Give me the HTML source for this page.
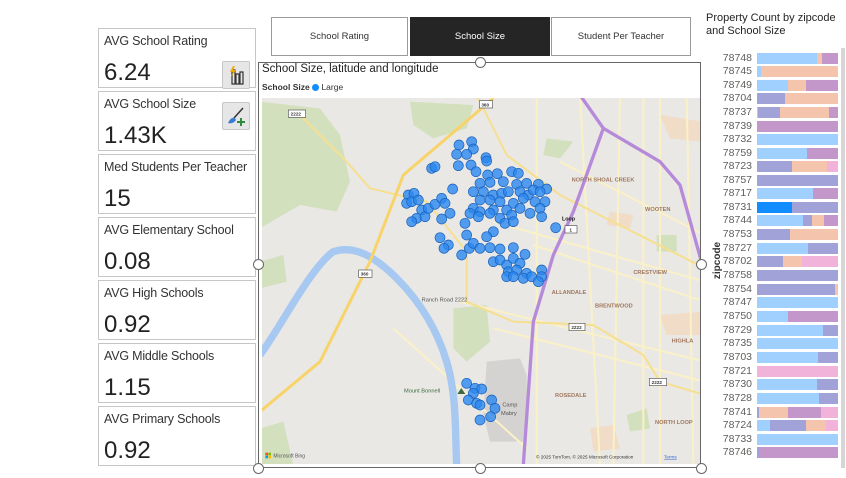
<!DOCTYPE html>
<html><head><meta charset="utf-8"><style>
*{margin:0;padding:0;box-sizing:border-box}
body{width:846px;height:478px;background:#fff;font-family:"Liberation Sans",sans-serif;position:relative;overflow:hidden;color:#252423}
.card{position:absolute;left:98px;width:158px;height:60px;border:1px solid #c8c6c4;background:#fff}
.card .l{position:absolute;left:5px;top:5px;font-size:12.5px;color:#333;white-space:nowrap;letter-spacing:-0.2px}
.card .v{position:absolute;left:5px;top:30px;font-size:24px;color:#222}
.tab{position:absolute;top:17px;height:39px;border:1px solid #9a9a9a;font-size:9.5px;display:flex;align-items:center;justify-content:center;color:#333;background:#fff}
.btn{position:absolute;left:222px;width:28px;height:28px;background:#e6e6e6;border:1px solid #c8c8c8;border-radius:2px}
.h{position:absolute;width:11px;height:11px;border:1px solid #666;border-radius:50%;background:#fff}
.row{position:absolute;left:706px;height:11px;width:132px}
.row span{position:absolute;right:86px;width:40px;text-align:right;font-size:10.5px;color:#605e5c;top:-1px}
.bar{position:absolute;left:51px;width:81px;height:11px;display:flex}
.bar i{display:block;height:11px}
.a{background:#9fd0ff}.p{background:#f5c4ac}.u{background:#c397c9}.w{background:#a1a3d8}.k{background:#f2b3da}.d{background:#118dff}
</style></head><body>

<div class="card" style="top:28px"><div class="l">AVG School Rating</div><div class="v">6.24</div></div>
<div class="card" style="top:91px"><div class="l">AVG School Size</div><div class="v">1.43K</div></div>
<div class="card" style="top:154px"><div class="l">Med Students Per Teacher</div><div class="v">15</div></div>
<div class="card" style="top:217px"><div class="l">AVG Elementary School</div><div class="v">0.08</div></div>
<div class="card" style="top:280px"><div class="l">AVG High Schools</div><div class="v">0.92</div></div>
<div class="card" style="top:343px"><div class="l">AVG Middle Schools</div><div class="v">1.15</div></div>
<div class="card" style="top:406px"><div class="l">AVG Primary Schools</div><div class="v">0.92</div></div>

<div class="btn" style="top:61px"><svg width="28" height="28"><path d="M9 8h3v14H9zM13 12h3v10h-3zM17 10h3v12h-3z" fill="none" stroke="#333" stroke-width="1.2"/><path d="M10 4l-3 6h3l-2 5 5-7h-3l2-4z" fill="#f2a900"/></svg></div>
<div class="btn" style="top:102px"><svg width="28" height="28"><path d="M20 5l-9 10" stroke="#333" stroke-width="1.5"/><path d="M5 20c2-4 4-6 7-5l1 2c-2 3-5 4-8 3z" fill="#3a7bd5"/><path d="M18 15v8M14 19h8" stroke="#2e8b3e" stroke-width="2"/></svg></div>

<div class="tab" style="left:271px;width:137px">School Rating</div>
<div class="tab" style="left:410px;width:140px;background:#252525;color:#fff;border-color:#252525">School Size</div>
<div class="tab" style="left:551px;width:140px">Student Per Teacher</div>

<div style="position:absolute;left:258px;top:62px;width:443px;height:406px;border:1px solid #666"></div>
<div style="position:absolute;left:262px;top:63px;font-size:11.5px;color:#222">School Size, latitude and longitude</div>
<div style="position:absolute;left:262px;top:82px;font-size:8.5px;color:#333"><b>School Size</b> <span style="display:inline-block;width:7px;height:7px;border-radius:50%;background:#118dff;vertical-align:-1px"></span> Large</div>

<div style="position:absolute;left:262px;top:98px;width:438px;height:366px;overflow:hidden">
<svg style="position:absolute;left:-2px;top:-3px" width="445" height="375" viewBox="0 0 1335 1125">
<rect width="1335" height="1125" fill="#e9e8e5"/>
<g fill="#d3e0bd">
<path d="M0 20L180 40L240 120L270 260L230 350L120 330L0 400Z"/>
<path d="M450 20L640 30L620 100L520 130L460 90Z"/>
<path d="M580 640L680 630L690 740L620 800L580 760Z"/>
<path d="M0 500L70 480L80 560L0 580Z"/>
<path d="M0 1000L70 980L100 1110L0 1110Z"/>
<path d="M860 130L940 140L900 190L850 180Z"/>
<path d="M1100 960L1160 940L1170 1000L1110 1010Z"/>
<path d="M1190 420L1250 420L1250 470L1190 470Z"/>
</g>
<g fill="#f1dcc7"><path d="M1200 60L1330 80L1330 140L1230 130Z"/><path d="M1050 350L1120 360L1110 400L1040 390Z"/><path d="M1200 660L1330 650L1330 720L1220 720Z"/><path d="M990 1000L1060 990L1080 1060L1000 1070Z"/></g>
<path d="M680 800L780 790L800 840L800 1040L690 1040L670 960Z" fill="#d4d3d1"/>
<g fill="none" stroke="#fbf1c7" stroke-width="6">
<path d="M830 0L830 1110M1080 0L1060 1110M1150 0L1150 1110M1280 0L1300 1110M700 380L1335 560M700 700L1335 860M600 620L1335 800M400 700L800 1060M900 200L1335 420M820 450L1335 620M960 0L1020 1110M1200 0L1200 1110"/>
</g>
<g fill="none" stroke="#f6df8e" stroke-width="6">
<path d="M120 60L260 200L330 280L500 320L620 470L620 620L760 680L1000 690L1150 780L1200 860L1335 900"/>
<path d="M650 0L740 180L900 300L1335 520"/>
</g>
<path d="M0 780C60 700 150 520 220 470C280 450 340 480 410 550C480 620 530 700 560 800C590 900 585 1000 590 1110" fill="none" stroke="#a6c8f1" stroke-width="22"/>
<path d="M700 10L430 240L330 500L180 800L0 950" fill="none" stroke="#f8d36a" stroke-width="9"/>
<path d="M960 0L1030 100L940 350L880 480L820 680L790 1110" fill="none" stroke="#b68ad8" stroke-width="10"/>
<path d="M1030 100L1200 200L1260 270L1330 520" fill="none" stroke="#b68ad8" stroke-width="10"/>
<g font-family="Liberation Sans" font-size="17" fill="#a0785f" font-weight="bold">
<text x="935" y="260">NORTH SHOAL CREEK</text><text x="1155" y="348">WOOTEN</text><text x="1120" y="537">CRESTVIEW</text><text x="875" y="597">ALLANDALE</text><text x="1005" y="637">BRENTWOOD</text><text x="885" y="906">ROSEDALE</text><text x="1185" y="987">NORTH LOOP</text><text x="1235" y="742">HIGHLA</text>
</g>
<g font-family="Liberation Sans" font-size="17" fill="#555"><text x="485" y="620">Ranch Road 2222</text><text x="727" y="935">Camp</text><text x="723" y="960">Mabry</text></g>
<text x="432" y="892" font-family="Liberation Sans" font-size="17" fill="#3d6b3f">Mount Bonnell</text>
<path d="M592 897l12-18 12 18z" fill="#3d6b3f"/>
<text x="906" y="376" font-family="Liberation Sans" font-size="16" fill="#111" font-weight="bold">Loop</text>
<g fill="#fff" stroke="#555" stroke-width="2"><rect x="85" y="45" width="52" height="22"/><rect x="658" y="17" width="40" height="22"/><rect x="296" y="525" width="40" height="22"/><rect x="915" y="392" width="36" height="22"/><rect x="927" y="685" width="48" height="22"/><rect x="1168" y="850" width="52" height="22"/></g>
<g font-family="Liberation Sans" font-size="14" fill="#333" font-weight="bold"><text x="92" y="62">2222</text><text x="664" y="34">360</text><text x="302" y="542">360</text><text x="928" y="409">1</text><text x="934" y="702">2222</text><text x="1175" y="867">2222</text></g>
<g fill="#2b88f0" fill-opacity="0.8" stroke="#1a5fb8" stroke-width="2">
<circle cx="597" cy="150" r="15"/><circle cx="635" cy="140" r="15"/><circle cx="640" cy="162" r="15"/><circle cx="590" cy="178" r="15"/><circle cx="620" cy="178" r="15"/><circle cx="678" cy="188" r="15"/><circle cx="680" cy="198" r="15"/><circle cx="515" cy="220" r="15"/><circle cx="525" cy="215" r="15"/><circle cx="595" cy="212" r="15"/><circle cx="633" cy="210" r="15"/><circle cx="648" cy="230" r="15"/><circle cx="683" cy="240" r="15"/><circle cx="712" cy="236" r="15"/><circle cx="755" cy="230" r="15"/><circle cx="775" cy="235" r="15"/><circle cx="660" cy="265" r="15"/><circle cx="690" cy="262" r="15"/><circle cx="730" cy="260" r="15"/><circle cx="770" cy="268" r="15"/><circle cx="800" cy="265" r="15"/><circle cx="835" cy="268" r="15"/><circle cx="860" cy="282" r="15"/><circle cx="578" cy="282" r="15"/><circle cx="445" cy="300" r="15"/><circle cx="462" cy="295" r="15"/><circle cx="440" cy="325" r="15"/><circle cx="455" cy="320" r="15"/><circle cx="475" cy="315" r="15"/><circle cx="485" cy="345" r="15"/><circle cx="470" cy="370" r="15"/><circle cx="455" cy="380" r="15"/><circle cx="495" cy="365" r="15"/><circle cx="505" cy="340" r="15"/><circle cx="525" cy="328" r="15"/><circle cx="545" cy="310" r="15"/><circle cx="555" cy="325" r="15"/><circle cx="570" cy="355" r="15"/><circle cx="545" cy="372" r="15"/><circle cx="640" cy="290" r="15"/><circle cx="670" cy="290" r="15"/><circle cx="700" cy="300" r="15"/><circle cx="725" cy="295" r="15"/><circle cx="745" cy="290" r="15"/><circle cx="780" cy="290" r="15"/><circle cx="805" cy="300" r="15"/><circle cx="820" cy="285" r="15"/><circle cx="840" cy="290" r="15"/><circle cx="660" cy="315" r="15"/><circle cx="690" cy="315" r="15"/><circle cx="720" cy="320" r="15"/><circle cx="760" cy="325" r="15"/><circle cx="790" cy="310" r="15"/><circle cx="825" cy="320" r="15"/><circle cx="855" cy="320" r="15"/><circle cx="640" cy="340" r="15"/><circle cx="660" cy="350" r="15"/><circle cx="700" cy="345" r="15"/><circle cx="740" cy="345" r="15"/><circle cx="780" cy="340" r="15"/><circle cx="840" cy="340" r="15"/><circle cx="630" cy="355" r="15"/><circle cx="655" cy="365" r="15"/><circle cx="690" cy="355" r="15"/><circle cx="720" cy="370" r="15"/><circle cx="755" cy="360" r="15"/><circle cx="810" cy="355" r="15"/><circle cx="845" cy="365" r="15"/><circle cx="735" cy="385" r="15"/><circle cx="760" cy="380" r="15"/><circle cx="615" cy="385" r="15"/><circle cx="887" cy="398" r="15"/><circle cx="700" cy="410" r="15"/><circle cx="620" cy="420" r="15"/><circle cx="680" cy="425" r="15"/><circle cx="540" cy="428" r="15"/><circle cx="565" cy="450" r="15"/><circle cx="552" cy="460" r="15"/><circle cx="605" cy="480" r="15"/><circle cx="628" cy="460" r="15"/><circle cx="640" cy="445" r="15"/><circle cx="660" cy="460" r="15"/><circle cx="690" cy="458" r="15"/><circle cx="720" cy="462" r="15"/><circle cx="760" cy="458" r="15"/><circle cx="795" cy="478" r="15"/><circle cx="700" cy="500" r="15"/><circle cx="720" cy="495" r="15"/><circle cx="740" cy="510" r="15"/><circle cx="760" cy="490" r="15"/><circle cx="780" cy="505" r="15"/><circle cx="745" cy="530" r="15"/><circle cx="770" cy="525" r="15"/><circle cx="800" cy="535" r="15"/><circle cx="740" cy="545" r="15"/><circle cx="760" cy="545" r="15"/><circle cx="790" cy="550" r="15"/><circle cx="815" cy="545" r="15"/><circle cx="845" cy="525" r="15"/><circle cx="845" cy="545" r="15"/><circle cx="835" cy="560" r="15"/><circle cx="620" cy="865" r="15"/><circle cx="645" cy="880" r="15"/><circle cx="665" cy="882" r="15"/><circle cx="640" cy="895" r="15"/><circle cx="625" cy="915" r="15"/><circle cx="650" cy="925" r="15"/><circle cx="660" cy="930" r="15"/><circle cx="695" cy="915" r="15"/><circle cx="705" cy="940" r="15"/><circle cx="692" cy="965" r="15"/><circle cx="660" cy="975" r="15"/>
</g>
<g><rect x="16" y="1073" width="8" height="8" fill="#f25022"/><rect x="25" y="1073" width="8" height="8" fill="#7fba00"/><rect x="16" y="1082" width="8" height="8" fill="#00a4ef"/><rect x="25" y="1082" width="8" height="8" fill="#ffb900"/></g>
<text x="40" y="1088" font-family="Liberation Sans" font-size="15" fill="#555">Microsoft Bing</text>
<text x="828" y="1090" font-family="Liberation Sans" font-size="14" fill="#333">© 2025 TomTom, © 2025 Microsoft Corporation</text>
<text x="1212" y="1090" font-family="Liberation Sans" font-size="14" fill="#3366cc" text-decoration="underline">Terms</text>
</svg></div>

<div class="h" style="left:475px;top:57px"></div>
<div class="h" style="left:253px;top:259px"></div>
<div class="h" style="left:696px;top:259px"></div>
<div class="h" style="left:253px;top:463px"></div>
<div class="h" style="left:475px;top:463px"></div>
<div class="h" style="left:696px;top:463px"></div>

<div style="position:absolute;left:706px;top:12px;font-size:11px;line-height:13px;color:#252423">Property Count by zipcode<br>and School Size</div>
<div style="position:absolute;left:699px;top:255px;transform:rotate(-90deg);font-size:10px;font-weight:bold;color:#333;transform-origin:center">zipcode</div>
<div style="position:absolute;left:841px;top:48px;width:4px;height:420px;background:#d6d6d6"></div>

<div class="row" style="top:53px"><span>78748</span><div class="bar"><i class="a" style="width:60px"></i><i class="p" style="width:5px"></i><i class="u" style="flex:1"></i></div></div>
<div class="row" style="top:66px"><span>78745</span><div class="bar"><i class="a" style="width:4px"></i><i class="p" style="flex:1"></i></div></div>
<div class="row" style="top:80px"><span>78749</span><div class="bar"><i class="a" style="width:31px"></i><i class="p" style="width:18px"></i><i class="u" style="flex:1"></i></div></div>
<div class="row" style="top:93px"><span>78704</span><div class="bar"><i class="w" style="width:28px"></i><i class="p" style="flex:1"></i></div></div>
<div class="row" style="top:107px"><span>78737</span><div class="bar"><i class="a" style="width:1px"></i><i class="w" style="width:22px"></i><i class="p" style="width:49px"></i><i class="u" style="flex:1"></i></div></div>
<div class="row" style="top:121px"><span>78739</span><div class="bar"><i class="u" style="flex:1"></i></div></div>
<div class="row" style="top:134px"><span>78732</span><div class="bar"><i class="a" style="flex:1"></i></div></div>
<div class="row" style="top:148px"><span>78759</span><div class="bar"><i class="a" style="width:50px"></i><i class="u" style="flex:1"></i></div></div>
<div class="row" style="top:161px"><span>78723</span><div class="bar"><i class="w" style="width:35px"></i><i class="p" style="width:35px"></i><i class="k" style="flex:1"></i></div></div>
<div class="row" style="top:175px"><span>78757</span><div class="bar"><i class="w" style="flex:1"></i></div></div>
<div class="row" style="top:188px"><span>78717</span><div class="bar"><i class="a" style="width:56px"></i><i class="u" style="flex:1"></i></div></div>
<div class="row" style="top:202px"><span>78731</span><div class="bar"><i class="d" style="width:35px"></i><i class="w" style="flex:1"></i></div></div>
<div class="row" style="top:215px"><span>78744</span><div class="bar"><i class="a" style="width:46px"></i><i class="w" style="width:9px"></i><i class="p" style="width:12px"></i><i class="u" style="flex:1"></i></div></div>
<div class="row" style="top:229px"><span>78753</span><div class="bar"><i class="w" style="width:33px"></i><i class="p" style="flex:1"></i></div></div>
<div class="row" style="top:243px"><span>78727</span><div class="bar"><i class="a" style="width:51px"></i><i class="w" style="flex:1"></i></div></div>
<div class="row" style="top:256px"><span>78702</span><div class="bar"><i class="w" style="width:26px"></i><i class="p" style="width:19px"></i><i class="k" style="flex:1"></i></div></div>
<div class="row" style="top:270px"><span>78758</span><div class="bar"><i class="w" style="flex:1"></i></div></div>
<div class="row" style="top:284px"><span>78754</span><div class="bar"><i class="w" style="width:78px"></i><i class="p" style="flex:1"></i></div></div>
<div class="row" style="top:297px"><span>78747</span><div class="bar"><i class="a" style="flex:1"></i></div></div>
<div class="row" style="top:311px"><span>78750</span><div class="bar"><i class="a" style="width:31px"></i><i class="u" style="flex:1"></i></div></div>
<div class="row" style="top:325px"><span>78729</span><div class="bar"><i class="a" style="width:66px"></i><i class="w" style="flex:1"></i></div></div>
<div class="row" style="top:338px"><span>78735</span><div class="bar"><i class="a" style="flex:1"></i></div></div>
<div class="row" style="top:352px"><span>78703</span><div class="bar"><i class="a" style="width:61px"></i><i class="w" style="flex:1"></i></div></div>
<div class="row" style="top:366px"><span>78721</span><div class="bar"><i class="k" style="flex:1"></i></div></div>
<div class="row" style="top:379px"><span>78730</span><div class="bar"><i class="a" style="width:60px"></i><i class="w" style="flex:1"></i></div></div>
<div class="row" style="top:393px"><span>78728</span><div class="bar"><i class="a" style="width:62px"></i><i class="w" style="flex:1"></i></div></div>
<div class="row" style="top:407px"><span>78741</span><div class="bar"><i class="w" style="width:2px"></i><i class="p" style="width:29px"></i><i class="u" style="width:33px"></i><i class="k" style="flex:1"></i></div></div>
<div class="row" style="top:420px"><span>78724</span><div class="bar"><i class="a" style="width:13px"></i><i class="w" style="width:36px"></i><i class="p" style="width:20px"></i><i class="k" style="flex:1"></i></div></div>
<div class="row" style="top:434px"><span>78733</span><div class="bar"><i class="a" style="flex:1"></i></div></div>
<div class="row" style="top:447px"><span>78746</span><div class="bar"><i class="w" style="width:3px"></i><i class="u" style="flex:1"></i></div></div>
</body></html>
